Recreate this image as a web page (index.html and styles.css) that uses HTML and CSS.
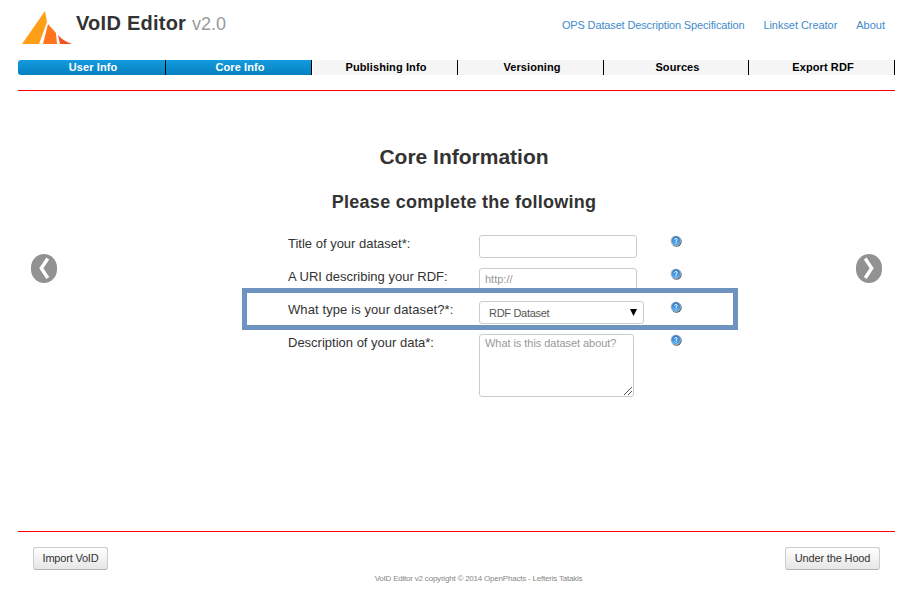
FILE: index.html
```html
<!DOCTYPE html>
<html lang="en">
<head>
<meta charset="utf-8">
<title>VoID Editor</title>
<link rel="stylesheet" href="styles.css">
</head>
<body>
<svg class="defs" width="0" height="0">
  <defs>
    <linearGradient id="ball" x1="0" y1="0" x2="0" y2="1"><stop offset="0" stop-color="#2d78c4"/><stop offset="1" stop-color="#62b4f3"/></linearGradient>
    <symbol id="help" viewBox="0 0 12 12">
      <circle cx="6.5" cy="6.5" r="5.2" fill="#666"/>
      <circle cx="5.7" cy="5.6" r="5.2" fill="#c8c8c8"/>
      <circle cx="6" cy="5.9" r="4.6" fill="url(#ball)"/>
      <path d="M4.4 4.6Q4.6 3.6 5.9 3.6Q7.4 3.6 7.3 4.7Q7.2 5.4 6 6V6.7M6 7.5V8.5" fill="none" stroke="#fff" stroke-width="1"/>
    </symbol>
  </defs>
</svg>
<header class="header">
  <svg class="logo" viewBox="0 0 52 36">
    <path d="M24 1L26 12L18 34H1Z" fill="#ff9f17"/>
    <path d="M27 14L35 23L36 34H22Z" fill="#ff751d"/>
    <path d="M37 25Q42 31 51 34H39Z" fill="#f4511e"/>
  </svg>
  <h1 class="brand">VoID Editor <small>v2.0</small></h1>
  <nav class="links"><a class="spec">OPS Dataset Description Specification</a><a class="linkset">Linkset Creator</a><a>About</a></nav>
</header>
<nav class="steps">
  <a class="step done">User Info</a><a class="step done">Core Info</a><a class="step">Publishing Info</a><a class="step">Versioning</a><a class="step">Sources</a><a class="step">Export RDF</a>
</nav>
<main class="main">
  <svg class="arrow" viewBox="0 0 26 29"><rect width="26" height="29" rx="13" ry="13.5" fill="#929292"/><path d="M16.8 4.5L10.3 14.3L16.8 24" fill="none" stroke="#fff" stroke-width="3.4"/></svg>
  <section class="content">
    <h2>Core Information</h2>
    <h3>Please complete the following</h3>
    <form class="form">
      <div class="row"><label>Title of your dataset*:</label><div class="field"><div class="input"></div></div><svg class="help"><use href="#help"/></svg></div>
      <div class="row"><label>A URI describing your RDF:</label><div class="field"><div class="input hint url">http://</div></div><svg class="help"><use href="#help"/></svg></div>
      <div class="row marked"><label class="type">What type is your dataset?*:</label><div class="field"><div class="input select"><span>RDF Dataset</span><svg class="caret" viewBox="0 0 7 7"><path d="M0 0H7L3.5 7Z"/></svg></div></div><svg class="help"><use href="#help"/></svg></div>
      <div class="row"><label>Description of your data*:</label><div class="field"><div class="input area hint"><span>What is this dataset about?</span><svg class="grip" viewBox="0 0 8 8"><path d="M0 8L8 0M4 8L8 4" stroke="#555" fill="none"/></svg></div></div><svg class="help"><use href="#help"/></svg></div>
    </form>
  </section>
  <svg class="arrow" viewBox="0 0 26 29"><rect width="26" height="29" rx="13" ry="13.5" fill="#929292"/><path d="M9.2 4.5L15.7 14.3L9.2 24" fill="none" stroke="#fff" stroke-width="3.4"/></svg>
</main>
<footer class="footer">
  <div class="actions"><button class="btn import">Import VoID</button><button class="btn hood">Under the Hood</button></div>
  <p class="copy">VoID Editor v2 copyright © 2014 OpenPhacts - Lefteris Tatakis</p>
</footer>
</body>
</html>
```
FILE: styles.css
```css
* { box-sizing: border-box; }
body {
  margin: 0;
  width: 905px;
  height: 593px;
  padding: 0 10px 0 18px;
  overflow: hidden;
  background: #fff;
  color: #333;
  font: 13px/20px "Liberation Sans", Arial, sans-serif;
}
.defs { display: block; }
.header { display: flex; height: 60px; padding: 10px 10px 0 3px; }
.logo { width: 52px; height: 36px; flex: none; }
.brand { margin: 1px 0 0 3px; font-size: 20px; line-height: 24px; white-space: nowrap; letter-spacing: 0.25px; }
.brand small { font-size: 18px; font-weight: normal; color: #999; letter-spacing: 0; }
.links { display: flex; gap: 19px; margin: 5px 0 0 auto; font-size: 11px; white-space: nowrap; color: #428bca; }
.spec { letter-spacing: -0.14px; }
.linkset { letter-spacing: -0.05px; }
.steps { display: grid; grid-template-columns: 148px 146px 146px 146px 145px 146px; height: 15px; border-radius: 3px 0 0 3px; overflow: hidden; }
.step {
  border-right: 1px solid #000;
  background: #f5f5f5;
  color: #000;
  font-size: 11px;
  font-weight: bold;
  line-height: 15px;
  text-align: center;
  padding-left: 3px;
  letter-spacing: 0.1px;
}
.step.done { background: linear-gradient(#149bdf, #0480be); color: #fff; }
.step.done + .step:not(.done) { box-shadow: inset 1px 0 #fff; }
.main { display: flex; justify-content: space-between; height: 441px; margin-top: 15px; padding: 0 13px; border-top: 1px solid red; }
.arrow { width: 26px; height: 29px; margin-top: 163px; flex: none; }
.content { width: 496px; margin: 0 auto 0 185px; }
h2 { margin: 54px 52px 0 0; font-size: 21px; line-height: 24px; text-align: center; }
h3 { margin: 21px 52px 0 0; font-size: 18px; line-height: 24px; letter-spacing: 0.25px; text-align: center; }
.form { margin: 17px 0 0; }
.row { display: grid; grid-template-columns: 191px 191px 12px; height: 33px; padding: 4px 0 0 46px; }
.row label { line-height: 20px; margin-top: -1px; white-space: nowrap; }
.row .type { letter-spacing: 0.1px; }
.marked { position: relative; }
.marked::after { content: ""; box-sizing: border-box; position: absolute; left: 0; top: -9px; width: 496px; height: 42px; border: 5px solid #6f93c0; }
.input { width: 158px; height: 23px; border: 1px solid #ccc; border-radius: 3px; padding: 0 5px; font-size: 11px; line-height: 21px; color: #555; }
.hint { color: #999; }
.select { width: 165px; padding: 1px 6px 0 9px; display: flex; justify-content: space-between; letter-spacing: -0.3px; }
.caret { width: 7px; height: 7px; margin-top: 6px; fill: #000; }
.area { width: 155px; height: 63px; display: flex; flex-direction: column; line-height: 17px; padding: 0 1px 1px 5px; white-space: nowrap; letter-spacing: -0.05px; }
.grip { width: 8px; height: 8px; margin: auto 0 0 auto; }
.help { width: 12px; height: 12px; }
.footer { border-top: 1px solid red; }
.actions { display: flex; justify-content: space-between; padding: 15px 15px 0; }
.btn {
  width: 75px;
  height: 23px;
  padding: 0 0 1px;
  border: 1px solid #ccc;
  border-bottom-color: #b3b3b3;
  border-radius: 3px;
  background: linear-gradient(#fff, #e6e6e6);
  color: #333;
  font: 11px/20px "Liberation Sans", Arial, sans-serif;
  letter-spacing: -0.2px;
}
.hood { width: 95px; }
.hood { letter-spacing: -0.15px; }
.copy { margin: 1px 0 0; padding-left: 44px; font-size: 8px; line-height: 16px; text-align: center; color: #888; letter-spacing: -0.21px; }
```
